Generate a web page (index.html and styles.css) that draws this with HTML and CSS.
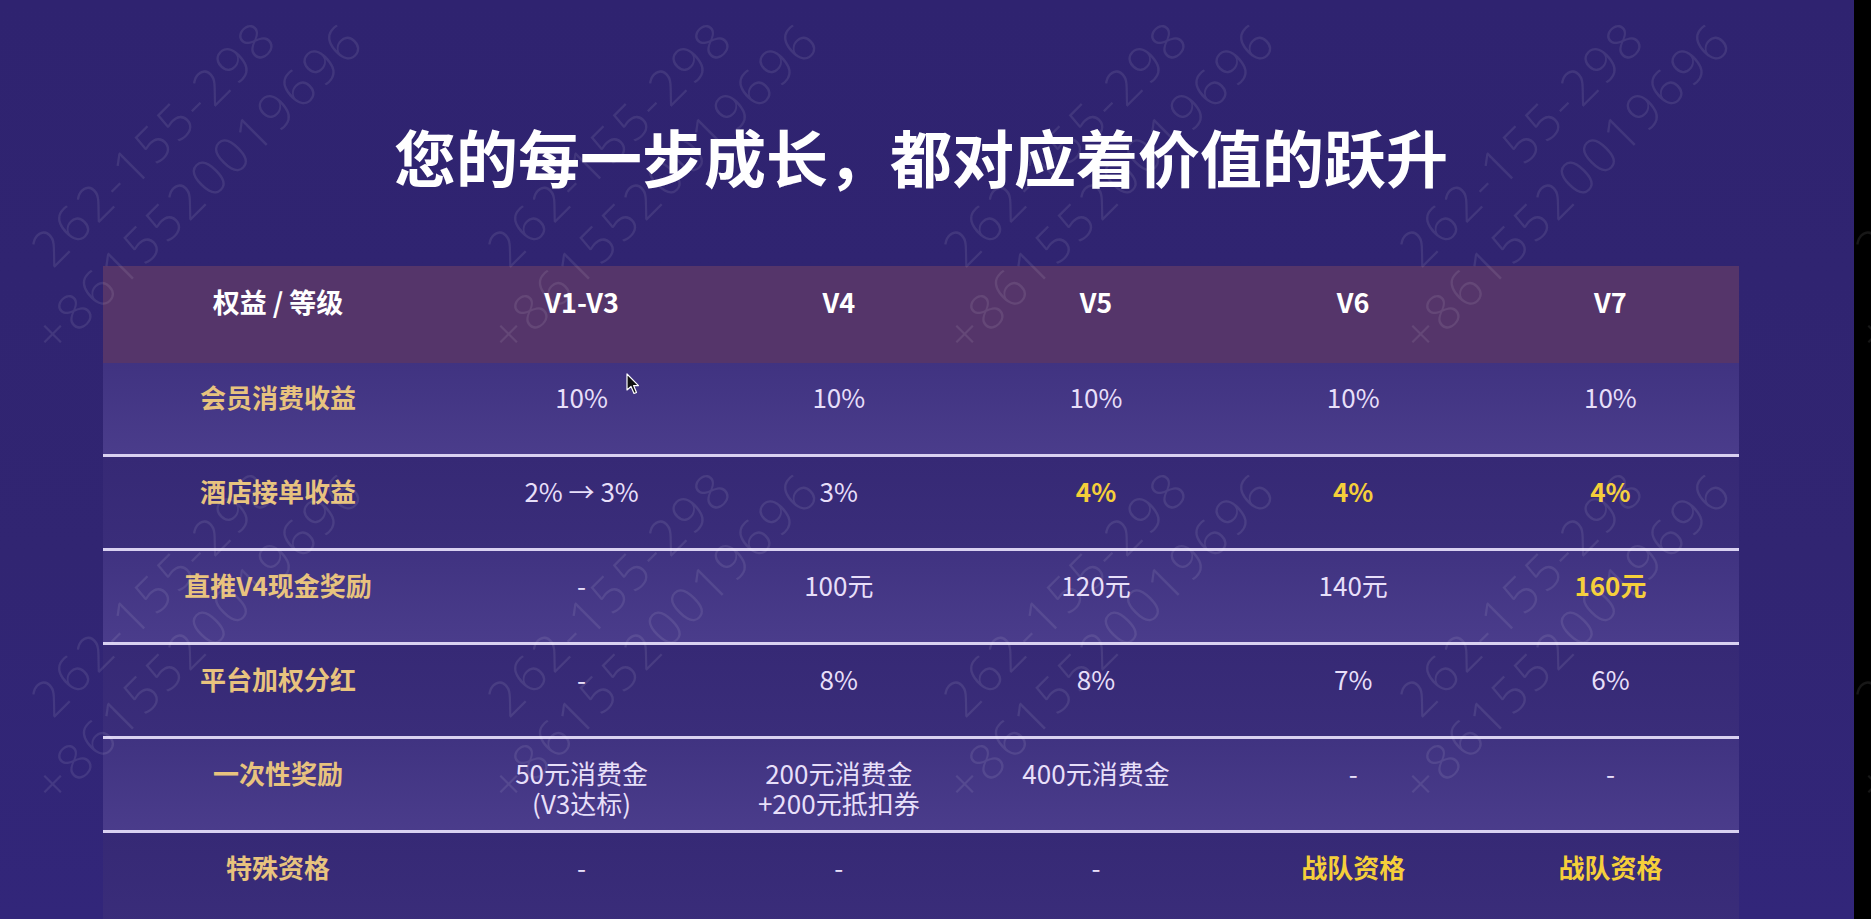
FILE: index.html
```html
<!DOCTYPE html>
<html lang="zh-CN">
<head>
<meta charset="utf-8">
<title>会员等级权益</title>
<link rel="stylesheet" href="styles.css">
</head>
<body>
<div class="screen">
  <main class="slide">
    <h1 class="title">您的每一步成长，都对应着价值的跃升</h1>
    <div class="table">
      <div class="row row-head">
        <div class="cell">权益 / 等级</div>
        <div class="cell">V1-V3</div>
        <div class="cell">V4</div>
        <div class="cell">V5</div>
        <div class="cell">V6</div>
        <div class="cell">V7</div>
      </div>
      <div class="row body-row row-light">
        <div class="cell label">会员消费收益</div>
        <div class="cell val">10%</div>
        <div class="cell val">10%</div>
        <div class="cell val">10%</div>
        <div class="cell val">10%</div>
        <div class="cell val">10%</div>
      </div>
      <div class="row body-row row-dark">
        <div class="cell label">酒店接单收益</div>
        <div class="cell val">2% → 3%</div>
        <div class="cell val">3%</div>
        <div class="cell hl">4%</div>
        <div class="cell hl">4%</div>
        <div class="cell hl">4%</div>
      </div>
      <div class="row body-row row-light">
        <div class="cell label">直推V4现金奖励</div>
        <div class="cell val">-</div>
        <div class="cell val">100元</div>
        <div class="cell val">120元</div>
        <div class="cell val">140元</div>
        <div class="cell hl">160元</div>
      </div>
      <div class="row body-row row-dark">
        <div class="cell label">平台加权分红</div>
        <div class="cell val">-</div>
        <div class="cell val">8%</div>
        <div class="cell val">8%</div>
        <div class="cell val">7%</div>
        <div class="cell val">6%</div>
      </div>
      <div class="row body-row row-light">
        <div class="cell label">一次性奖励</div>
        <div class="cell val"><span class="line">50元消费金</span><span class="line">(V3达标)</span></div>
        <div class="cell val"><span class="line">200元消费金</span><span class="line">+200元抵扣券</span></div>
        <div class="cell val">400元消费金</div>
        <div class="cell val">-</div>
        <div class="cell val">-</div>
      </div>
      <div class="row body-row row-dark row-last">
        <div class="cell label">特殊资格</div>
        <div class="cell val">-</div>
        <div class="cell val">-</div>
        <div class="cell val">-</div>
        <div class="cell hl">战队资格</div>
        <div class="cell hl">战队资格</div>
      </div>
    </div>
  </main>
  <div class="edge"></div>

  <div class="watermarks" aria-hidden="true">
    <div class="wm-cell"><div class="wm">262-155-298<br>+8615520019696</div></div>
    <div class="wm-cell"><div class="wm">262-155-298<br>+8615520019696</div></div>
    <div class="wm-cell"><div class="wm">262-155-298<br>+8615520019696</div></div>
    <div class="wm-cell"><div class="wm">262-155-298<br>+8615520019696</div></div>
    <div class="wm-cell"><div class="wm">262-155-298<br>+8615520019696</div></div>
    <div class="wm-cell"><div class="wm">262-155-298<br>+8615520019696</div></div>
    <div class="wm-cell"><div class="wm">262-155-298<br>+8615520019696</div></div>
    <div class="wm-cell"><div class="wm">262-155-298<br>+8615520019696</div></div>
    <div class="wm-cell"><div class="wm">262-155-298<br>+8615520019696</div></div>
    <div class="wm-cell"><div class="wm">262-155-298<br>+8615520019696</div></div>
    <div class="wm-cell"><div class="wm">262-155-298<br>+8615520019696</div></div>
    <div class="wm-cell"><div class="wm">262-155-298<br>+8615520019696</div></div>
    <div class="wm-cell"><div class="wm">262-155-298<br>+8615520019696</div></div>
    <div class="wm-cell"><div class="wm">262-155-298<br>+8615520019696</div></div>
    <div class="wm-cell"><div class="wm">262-155-298<br>+8615520019696</div></div>
  </div>

  <svg class="cursor" width="14" height="22" viewBox="0 0 14 22" aria-hidden="true">
    <path d="M1 1 L1 17 L5 13.5 L8 20.5 L10.5 19.5 L7.6 12.6 L12.5 12.6 Z" fill="#111" stroke="#fff" stroke-width="1.2" stroke-linejoin="round"/>
  </svg>
</div>
</body>
</html>
```

FILE: styles.css
```css
html, body {
  margin: 0;
  padding: 0;
  background: #000;
  overflow: hidden;
}

.screen {
  position: relative;
  display: flex;
  width: 1871px;
  height: 919px;
  overflow: hidden;
  font-family: "Noto Sans CJK SC", "Noto Sans", sans-serif;
}

.slide {
  flex: none;
  width: 1854px;
  height: 919px;
  box-sizing: border-box;
  padding-left: 103px;
  background: linear-gradient(180deg, #2f2370 0%, #312572 60%, #32267a 100%);
  overflow: hidden;
}

.edge {
  flex: 1;
  background: #000;
}

.title {
  width: 1636px;
  margin: 0 0 73px 0;
  padding-top: 119px;
  font-size: 62px;
  line-height: 74px;
  font-weight: 700;
  color: #ffffff;
  text-align: center;
  letter-spacing: 0;
}

.table {
  width: 1636px;
}

.row {
  display: grid;
  grid-template-columns: 350px repeat(5, 1fr);
  box-sizing: border-box;
}

.cell {
  text-align: center;
}

.row-head {
  height: 97px;
  padding-top: 20px;
  background: #55356a;
}

.row-head .cell {
  font-size: 27px;
  line-height: 32px;
  font-weight: 700;
  color: #ffffff;
}

.body-row {
  height: 94px;
  padding-top: 19px;
  border-bottom: 3px solid #d9d1f1;
}

.body-row .cell {
  font-size: 26px;
  line-height: 30px;
}

.line {
  display: block;
  height: 30px;
}

.row-last {
  border-bottom: none;
}

.row-light {
  background: linear-gradient(180deg, #403381 0%, #4a3c8b 100%);
}

.row-dark {
  background: linear-gradient(180deg, #362975 0%, #3a2d7a 100%);
}

.label {
  font-weight: 700;
  color: #e8c37e;
}

.val {
  font-weight: 400;
  color: #e7dff9;
}

.hl {
  font-weight: 700;
  color: #f5cf3a;
}

/* watermark overlay */
.watermarks {
  position: absolute;
  left: -52px;
  top: -60px;
  display: grid;
  grid-template-columns: repeat(5, 456px);
  grid-template-rows: repeat(3, 450px);
  pointer-events: none;
}

.wm-cell {
  display: flex;
  align-items: center;
  justify-content: center;
}

.wm {
  transform: rotate(-45deg);
  white-space: nowrap;
  text-align: center;
  font-family: "Open Sans", "Noto Sans", sans-serif;
  font-weight: 300;
  font-size: 50px;
  line-height: 63px;
  letter-spacing: 3px;
  color: rgba(255, 255, 255, 0.09);
}

.cursor {
  position: absolute;
  left: 626px;
  top: 373px;
}
```
